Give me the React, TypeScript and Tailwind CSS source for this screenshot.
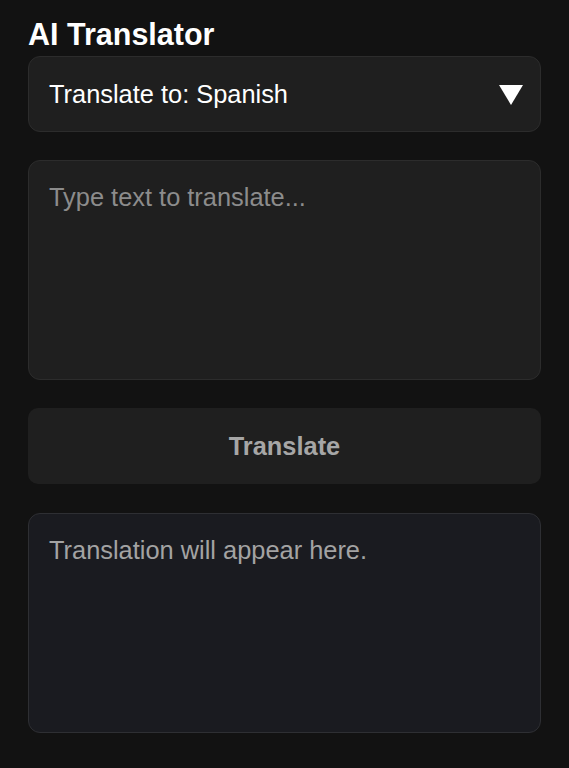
import React from "react";

export default function App() {
  return (
    <div
      className="min-h-screen bg-[#121212] px-[28px] pt-[16px] pb-[34px]"
      style={{ fontFamily: '"Liberation Sans", Arial, Helvetica, sans-serif' }}
    >
      <h1 className="text-[30.5px] leading-[36px] font-bold text-white mb-[4px]">AI Translator</h1>
      <div className="flex flex-col gap-[28px]">
        <div className="h-[76px] rounded-[12px] border border-[#2c2c2c] bg-[#1f1f1f] flex items-center justify-between pl-[20px] pr-[17px]">
          <span className="text-[25.4px] leading-[30px] text-white">Translate to: Spanish</span>
          <svg width="24" height="20" viewBox="0 0 24 20" className="mt-[1px]">
            <polygon points="0,0 24,0 12,20" fill="#ffffff" />
          </svg>
        </div>
        <div className="h-[220px] rounded-[12px] border border-[#2c2c2c] bg-[#1f1f1f] px-[20px] pt-[21px]">
          <span className="text-[25.4px] leading-[30px] text-[#8c8c8c]">Type text to translate...</span>
        </div>
        <div className="h-[76px] rounded-[10px] bg-[#1f1f1f] flex items-center justify-center">
          <span className="text-[25.4px] leading-[30px] font-bold text-[#a6a6a6]">Translate</span>
        </div>
        <div className="mt-[1px] h-[220px] rounded-[12px] border border-[#2e2f33] bg-[#1a1b20] px-[20px] pt-[21px]">
          <span className="text-[25.4px] leading-[30px] text-[#a3a3a3]">Translation will appear here.</span>
        </div>
      </div>
    </div>
  );
}
